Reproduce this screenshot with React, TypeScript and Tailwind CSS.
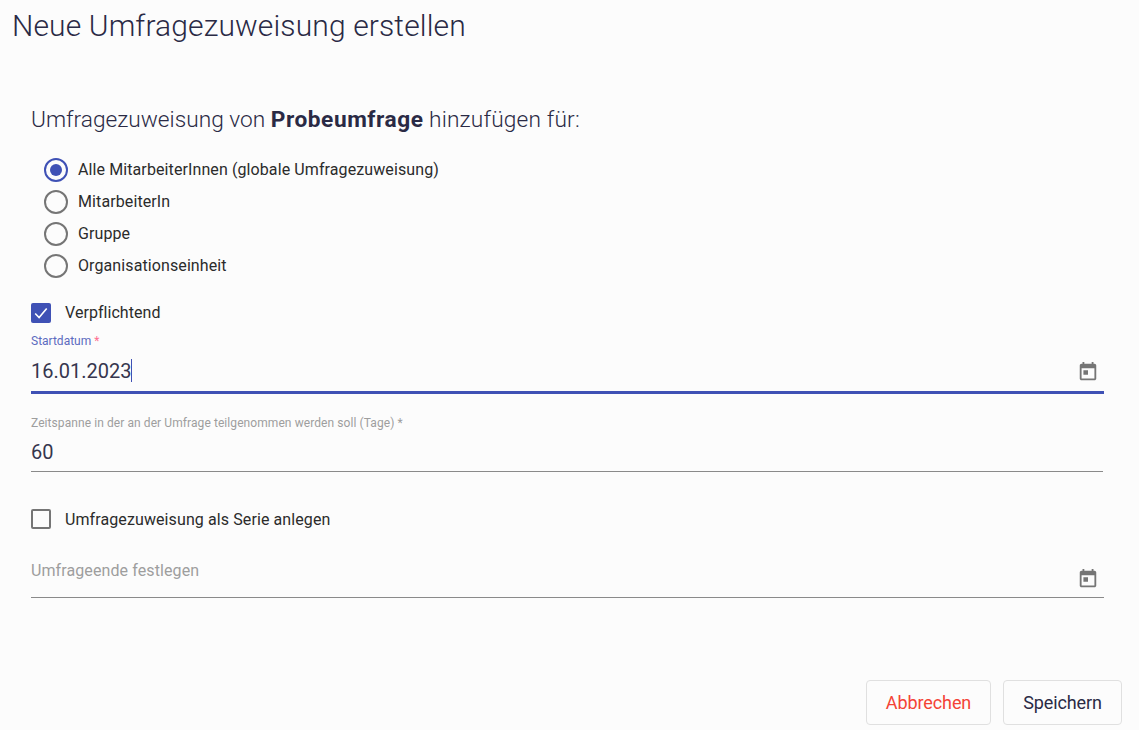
function TodayIcon() {
  return (
    <svg viewBox="0 0 24 24" className="w-[22px] h-[22px] fill-[#757575] shrink-0">
      <path d="M19 3h-1V1h-2v2H8V1H6v2H5c-1.11 0-1.99.9-1.99 2L3 19c0 1.1.89 2 2 2h14c1.1 0 2-.9 2-2V5c0-1.1-.9-2-2-2zm0 16H5V8h14v11zM7 10h5v5H7z" />
    </svg>
  );
}

function Radio({ label, checked }: { label: string; checked?: boolean }) {
  return (
    <div className="flex items-center h-8">
      <span
        className={
          checked
            ? "w-6 h-6 rounded-full border-2 border-[#3f51b5] flex items-center justify-center"
            : "w-6 h-6 rounded-full border-2 border-[#757575] flex items-center justify-center"
        }
      >
        {checked && <span className="w-3 h-3 rounded-full bg-[#3f51b5]" />}
      </span>
      <span className="ml-[10px] text-[16px] tracking-[0.1px] text-[#2b2b2b]">{label}</span>
    </div>
  );
}

export default function App() {
  return (
    <div className="w-[1139px] h-[730px] bg-[#fcfcfc] overflow-hidden flex flex-col font-['Roboto',sans-serif] text-[#2a2a45]">
      <h1 className="pl-[12px] pt-[6px] text-[30px] leading-[40px] font-light tracking-[0.13px]">
        Neue Umfragezuweisung erstellen
      </h1>

      <div className="pl-[31px] pr-[35px] pt-[58px] flex flex-col">
        <p className="text-[22.7px] leading-[32px] font-light">
          Umfragezuweisung von <b className="font-bold tracking-[0.55px]">Probeumfrage</b>{" "}
          <span className="tracking-[0.17px]">hinzufügen für:</span>
        </p>

        <div className="pl-[13px] pt-[18px] flex flex-col">
          <Radio label="Alle MitarbeiterInnen (globale Umfragezuweisung)" checked />
          <Radio label="MitarbeiterIn" />
          <Radio label="Gruppe" />
          <Radio label="Organisationseinheit" />
        </div>

        <div className="flex items-center mt-[21px] h-5">
          <span className="w-5 h-5 rounded-[2px] bg-[#3f51b5] flex items-center justify-center">
            <svg viewBox="0 0 20 20" className="w-5 h-5 fill-none stroke-white stroke-[1.6]">
              <path d="M4.2 10.5l3.9 4 7.6-9" />
            </svg>
          </span>
          <span className="ml-[14px] text-[16px] tracking-[0.05px] text-[#2b2b2b]">Verpflichtend</span>
        </div>

        <label className="mt-[11px] text-[12px] leading-[14px] text-[#5c6bc0]">
          Startdatum <span className="text-[#ff6f91]">*</span>
        </label>
        <div className="flex items-center justify-between h-[46px] pt-[2px] border-b-[3px] border-[#3f51b5]">
          <span className="flex items-center text-[20px] text-[#36364e]">
            16.01.2023
            <span className="w-px h-[23px] bg-[#3f51b5]" />
          </span>
          <span className="mr-[5px] mt-[2px]">
            <TodayIcon />
          </span>
        </div>

        <label className="mt-[22px] text-[12px] leading-[14px] tracking-[0.08px] text-[#9e9e9e]">
          Zeitspanne in der an der Umfrage teilgenommen werden soll (Tage) *
        </label>
        <div className="flex items-center h-[42px] pt-[2px] mr-px border-b border-[#8a8a8a] text-[20px] text-[#36364e]">60</div>

        <div className="flex items-center mt-[37px] h-5">
          <span className="w-5 h-5 rounded-[2px] border-2 border-[#757575]" />
          <span className="ml-[14px] pt-px text-[16px] tracking-[0.1px] text-[#2b2b2b]">Umfragezuweisung als Serie anlegen</span>
        </div>

        <div className="flex items-center justify-between h-[50px] mt-[19px] border-b border-[#8a8a8a]">
          <span className="text-[16px] tracking-[0.1px] text-[#9e9e9e] -mt-[3px]">Umfrageende festlegen</span>
          <span className="mr-[5px] mt-[12px]">
            <TodayIcon />
          </span>
        </div>
      </div>

      <div className="mt-auto mb-[5px] pr-[17px] flex justify-end gap-3">
        <button className="w-[125px] h-[45px] rounded border border-[#e0e0e0] text-[18px] tracking-[-0.1px] text-[#f44336]">
          Abbrechen
        </button>
        <button className="w-[119px] h-[45px] rounded border border-[#e0e0e0] text-[18px] tracking-[-0.1px]">
          Speichern
        </button>
      </div>
    </div>
  );
}
